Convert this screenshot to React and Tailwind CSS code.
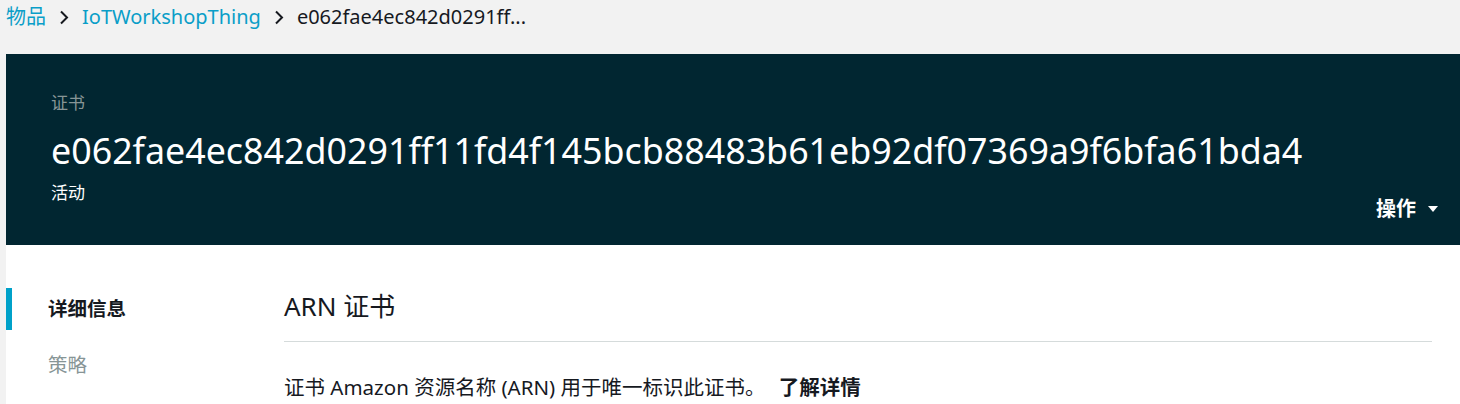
import React from 'react';

const font = { fontFamily: '"Noto Sans", "Noto Sans CJK SC", sans-serif' };

const Chevron = () => (
  <svg width="10" height="15" viewBox="0 0 10 15" className="mx-[13px]">
    <path d="M2 1.5 L8 7.5 L2 13.5" fill="none" stroke="#16191f" strokeWidth="2" />
  </svg>
);

export default function App() {
  return (
    <div className="w-[1460px] h-[404px] overflow-hidden bg-[#f2f2f2]" style={font}>
      {/* Breadcrumb */}
      <nav className="h-[54px] flex items-start pt-[2px] pl-[6px] text-[20px] leading-[30px]">
        <span className="text-[#0a9ec8]">物品</span>
        <span className="flex items-center h-[30px]"><Chevron /></span>
        <span className="text-[#0a9ec8]">IoTWorkshopThing</span>
        <span className="flex items-center h-[30px]"><Chevron /></span>
        <span className="text-[#16191f]">e062fae4ec842d0291ff...</span>
      </nav>

      <div className="ml-[6px]">
        {/* Header banner */}
        <header className="h-[191px] bg-[#012631] pl-[45px] pr-[22px] pt-[37px] relative">
          <div className="text-[17px] leading-[24px] text-[#879596]">证书</div>
          <h1 className="text-[35.8px] leading-[48px] text-white mt-[11px]">
            e062fae4ec842d0291ff11fd4f145bcb88483b61eb92df07369a9f6bfa61bda4
          </h1>
          <div className="text-[17px] leading-[24px] text-white mt-[7px]">活动</div>
          <button className="absolute right-[22px] top-[140px] flex items-center gap-[12px] text-white font-bold text-[20px] leading-[30px]">
            <span>操作</span>
            <svg width="10" height="6" viewBox="0 0 10 6"><path d="M0 0 H10 L5 6 Z" fill="#ffffff" /></svg>
          </button>
        </header>

        {/* Content */}
        <div className="bg-white h-[160px] flex">
          <aside className="w-[278px] pt-[43px]">
            <div className="flex items-center h-[42px]">
              <div className="w-[6px] h-[42px] bg-[#00a1c9]" />
              <span className="ml-[36px] text-[19.5px] font-bold text-[#16191f]">详细信息</span>
            </div>
            <div className="h-[30px] mt-[20px] flex items-center pl-[42px] text-[19.5px] text-[#879596]">策略</div>
          </aside>
          <main className="flex-1 pr-[28px] pt-[44px]">
            <h2 className="text-[26px] leading-[34px] text-[#16191f] pb-[18px] border-b border-[#d5dbdb]">ARN 证书</h2>
            <p className="mt-[30px] text-[20.5px] leading-[30px] text-[#16191f]">
              证书 Amazon 资源名称 (ARN) 用于唯一标识此证书。 <span className="font-bold ml-[8px]">了解详情</span>
            </p>
          </main>
        </div>
      </div>
    </div>
  );
}
